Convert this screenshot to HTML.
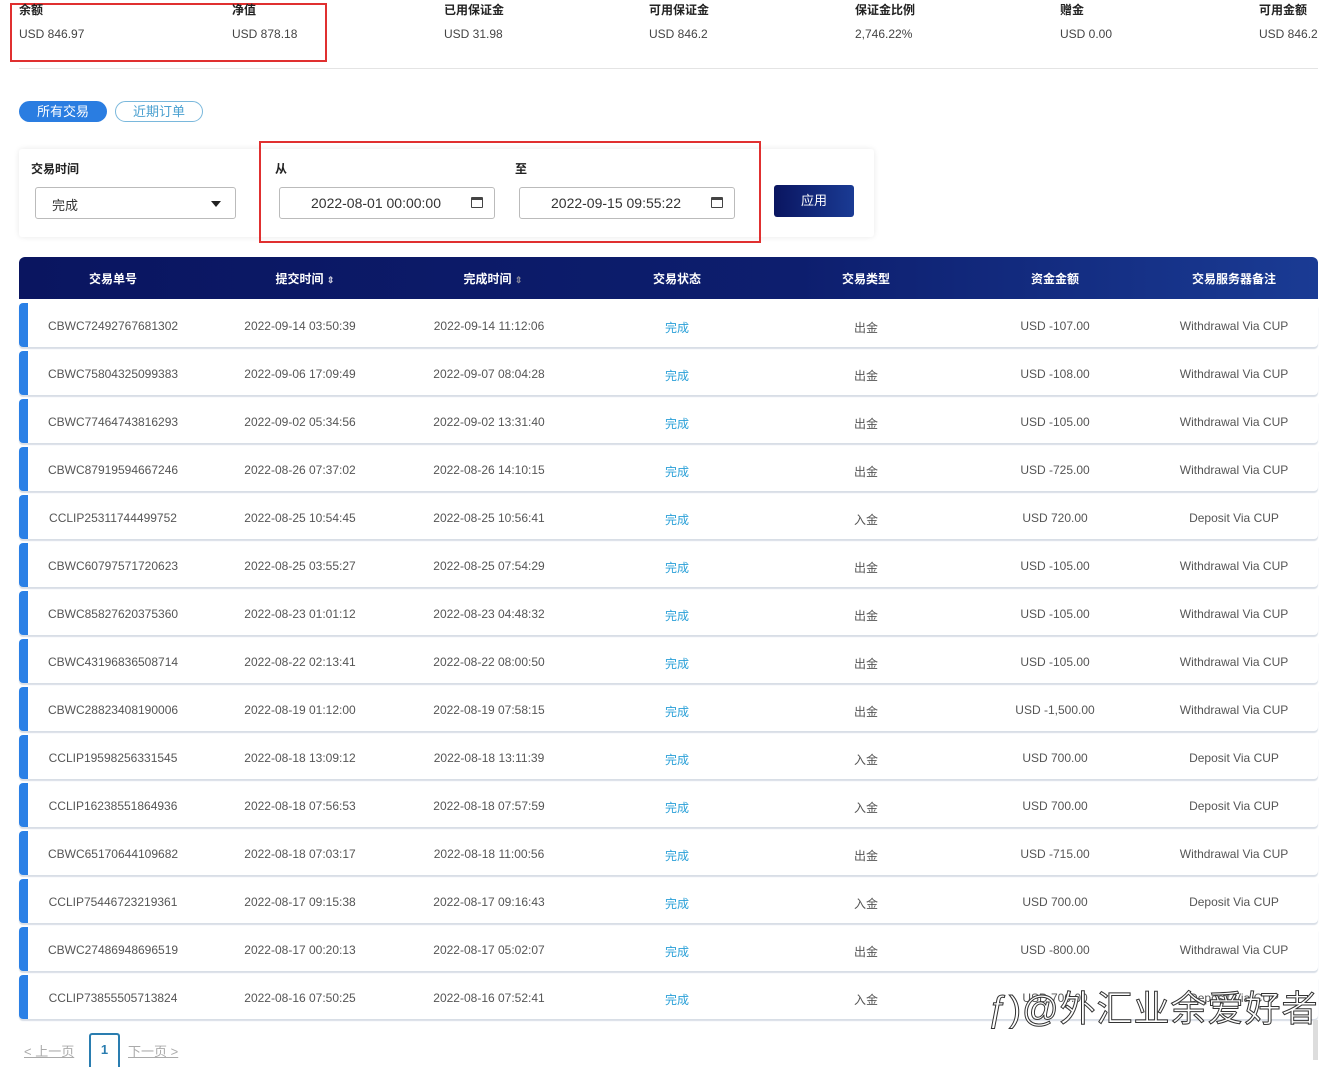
<!DOCTYPE html>
<html><head><meta charset="utf-8"><style>
*{margin:0;padding:0;box-sizing:border-box}
body{width:1336px;height:1064px;overflow:hidden;background:#fff;font-family:"Liberation Sans","Noto Sans CJK SC",sans-serif;color:#333;position:relative}
.abs{position:absolute}
.lbl{font-size:12px;font-weight:bold;color:#222}
.val{font-size:12px;color:#444}
.hdr{position:absolute;left:19px;top:257px;width:1299px;height:42px;background:linear-gradient(90deg,#0a1560,#0d1e6e 60%,#1a3b94);border-radius:6px 6px 0 0}
.hdr span{position:absolute;top:13px;color:#fff;font-size:12px;font-weight:bold;transform:translateX(-50%);white-space:nowrap}
.row{position:absolute;left:19px;width:1299px;height:44px;background:#fff;border-radius:4px;box-shadow:0 2px 1px #d8dee6}
.row:before{content:"";position:absolute;left:0;top:0;width:9px;height:44px;background:#2a80e6;border-radius:4px 0 0 4px}
.row span{position:absolute;top:16px;font-size:12px;color:#555;transform:translateX(-50%);white-space:nowrap}
.row span.st{color:#2aa0d8}
.inp{position:absolute;height:32px;border:1px solid #bbb;border-radius:3px;background:#fff;font-size:14px;color:#333}
.cal{position:absolute;width:12px;height:11px;border:1.5px solid #444;border-top-width:3px;border-radius:1px}
</style></head><body>
<div class="abs" style="left:10px;top:3px;width:317px;height:59px;border:2px solid #e03030"></div>
<div class="abs lbl" style="left:19px;top:1px">余额</div><div class="abs val" style="left:19px;top:27px">USD 846.97</div>
<div class="abs lbl" style="left:232px;top:1px">净值</div><div class="abs val" style="left:232px;top:27px">USD 878.18</div>
<div class="abs lbl" style="left:444px;top:1px">已用保证金</div><div class="abs val" style="left:444px;top:27px">USD 31.98</div>
<div class="abs lbl" style="left:649px;top:1px">可用保证金</div><div class="abs val" style="left:649px;top:27px">USD 846.2</div>
<div class="abs lbl" style="left:855px;top:1px">保证金比例</div><div class="abs val" style="left:855px;top:27px">2,746.22%</div>
<div class="abs lbl" style="left:1060px;top:1px">赠金</div><div class="abs val" style="left:1060px;top:27px">USD 0.00</div>
<div class="abs lbl" style="left:1259px;top:1px">可用金额</div><div class="abs val" style="left:1259px;top:27px">USD 846.2</div>
<div class="abs" style="left:19px;top:68px;width:1299px;height:1px;background:#e4e4e4"></div>

<div class="abs" style="left:19px;top:101px;width:88px;height:21px;border-radius:11px;background:#2a7de1;color:#fff;font-size:13px;text-align:center;line-height:21px">所有交易</div>
<div class="abs" style="left:115px;top:101px;width:88px;height:21px;border-radius:11px;border:1px solid #7ab8dc;color:#4aa0d0;font-size:13px;text-align:center;line-height:19px">近期订单</div>

<div class="abs" style="left:19px;top:149px;width:855px;height:88px;background:#fff;box-shadow:0 0 6px #e8e8e8;border-radius:3px"></div>
<div class="abs lbl" style="left:31px;top:160px">交易时间</div>
<div class="inp" style="left:35px;top:187px;width:201px"><span class="abs" style="left:16px;top:7px;font-size:13px">完成</span><span class="abs" style="right:14px;top:13px;border-left:5px solid transparent;border-right:5px solid transparent;border-top:6px solid #222"></span></div>
<div class="abs" style="left:259px;top:141px;width:502px;height:102px;border:2px solid #e03030"></div>
<div class="abs lbl" style="left:275px;top:160px">从</div>
<div class="abs lbl" style="left:515px;top:160px">至</div>
<div class="inp" style="left:279px;top:187px;width:216px"><span class="abs" style="left:31px;top:7px">2022-08-01 00:00:00</span><span class="cal" style="left:191px;top:9px"></span></div>
<div class="inp" style="left:519px;top:187px;width:216px"><span class="abs" style="left:31px;top:7px">2022-09-15 09:55:22</span><span class="cal" style="left:191px;top:9px"></span></div>
<div class="abs" style="left:774px;top:185px;width:80px;height:32px;border-radius:3px;background:linear-gradient(90deg,#0a1560,#1a3b94);color:#fff;font-size:13px;text-align:center;line-height:32px">应用</div>

<div class="hdr">
<span style="left:94px">交易单号</span>
<span style="left:286px">提交时间 <b style="font-size:9px;color:#ccd">⇕</b></span>
<span style="left:474px">完成时间 <b style="font-size:9px;color:#889">⇕</b></span>
<span style="left:658px">交易状态</span>
<span style="left:847px">交易类型</span>
<span style="left:1036px">资金金额</span>
<span style="left:1215px">交易服务器备注</span>
</div>

<div id="rows"></div>
<script>
var d=[["CBWC72492767681302","2022-09-14 03:50:39","2022-09-14 11:12:06","出金","USD -107.00","Withdrawal Via CUP"],
["CBWC75804325099383","2022-09-06 17:09:49","2022-09-07 08:04:28","出金","USD -108.00","Withdrawal Via CUP"],
["CBWC77464743816293","2022-09-02 05:34:56","2022-09-02 13:31:40","出金","USD -105.00","Withdrawal Via CUP"],
["CBWC87919594667246","2022-08-26 07:37:02","2022-08-26 14:10:15","出金","USD -725.00","Withdrawal Via CUP"],
["CCLIP25311744499752","2022-08-25 10:54:45","2022-08-25 10:56:41","入金","USD 720.00","Deposit Via CUP"],
["CBWC60797571720623","2022-08-25 03:55:27","2022-08-25 07:54:29","出金","USD -105.00","Withdrawal Via CUP"],
["CBWC85827620375360","2022-08-23 01:01:12","2022-08-23 04:48:32","出金","USD -105.00","Withdrawal Via CUP"],
["CBWC43196836508714","2022-08-22 02:13:41","2022-08-22 08:00:50","出金","USD -105.00","Withdrawal Via CUP"],
["CBWC28823408190006","2022-08-19 01:12:00","2022-08-19 07:58:15","出金","USD -1,500.00","Withdrawal Via CUP"],
["CCLIP19598256331545","2022-08-18 13:09:12","2022-08-18 13:11:39","入金","USD 700.00","Deposit Via CUP"],
["CCLIP16238551864936","2022-08-18 07:56:53","2022-08-18 07:57:59","入金","USD 700.00","Deposit Via CUP"],
["CBWC65170644109682","2022-08-18 07:03:17","2022-08-18 11:00:56","出金","USD -715.00","Withdrawal Via CUP"],
["CCLIP75446723219361","2022-08-17 09:15:38","2022-08-17 09:16:43","入金","USD 700.00","Deposit Via CUP"],
["CBWC27486948696519","2022-08-17 00:20:13","2022-08-17 05:02:07","出金","USD -800.00","Withdrawal Via CUP"],
["CCLIP73855505713824","2022-08-16 07:50:25","2022-08-16 07:52:41","入金","USD 700.00","Deposit Via CUP"]];
var x=[94,281,470,658,847,1036,1215],h="";
d.forEach(function(r,i){h+='<div class="row" style="top:'+(303+i*48)+'px"><span style="left:'+x[0]+'px">'+r[0]+'</span><span style="left:'+x[1]+'px">'+r[1]+'</span><span style="left:'+x[2]+'px">'+r[2]+'</span><span class="st" style="left:'+x[3]+'px">完成</span><span style="left:'+x[4]+'px">'+r[3]+'</span><span style="left:'+x[5]+'px">'+r[4]+'</span><span style="left:'+x[6]+'px">'+r[5]+'</span></div>';});
document.getElementById("rows").innerHTML=h;
</script>

<div class="abs" style="left:24px;top:1041px;font-size:13px;color:#aaa;text-decoration:underline">&lt; 上一页</div>
<div class="abs" style="left:89px;top:1033px;width:31px;height:34px;border:2px solid #2a7db0;border-bottom:none;border-radius:3px 3px 0 0;color:#2a7db0;font-size:13px;font-weight:bold;text-align:center;line-height:30px">1</div>
<div class="abs" style="left:128px;top:1041px;font-size:13px;color:#aaa;text-decoration:underline">下一页 &gt;</div>

<div class="abs" style="left:988px;top:980px;font-size:36px;color:#fff;-webkit-text-stroke:1px #333;white-space:nowrap;letter-spacing:1px">ƒ)@外汇业余爱好者</div>
<div class="abs" style="left:1313px;top:1020px;width:5px;height:40px;background:#ddd"></div>
</body></html>
